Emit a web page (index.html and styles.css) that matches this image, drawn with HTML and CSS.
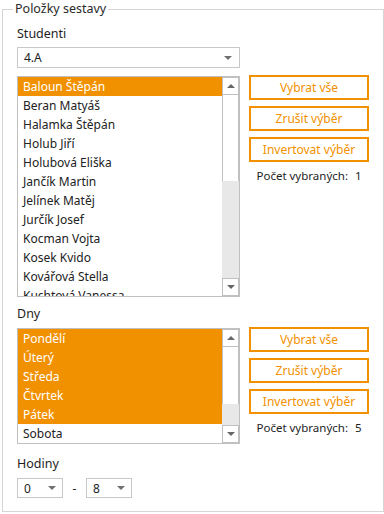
FILE: index.html
```html
<!DOCTYPE html>
<html lang="cs">
  <head>
    <meta charset="UTF-8" />
    <meta name="viewport" content="width=device-width, initial-scale=1.0" />
    <title>Položky sestavy</title>

    <link rel="stylesheet" href="styles.css">
  </head>
  <body>
    <fieldset class="panel">
      <legend>Položky sestavy</legend>

      <p class="label">Studenti</p>
      <div class="combo">
        <span>4.A</span>
        <span class="arrow"></span>
      </div>

      <div class="pick pick-students">
        <div class="listbox">
          <ul class="items">
            <li class="selected">Baloun Štěpán</li>
            <li>Beran Matyáš</li>
            <li>Halamka Štěpán</li>
            <li>Holub Jiří</li>
            <li>Holubová Eliška</li>
            <li>Jančík Martin</li>
            <li>Jelínek Matěj</li>
            <li>Jurčík Josef</li>
            <li>Kocman Vojta</li>
            <li>Kosek Kvido</li>
            <li>Kovářová Stella</li>
            <li>Kuchtová Vanessa</li>
          </ul>
          <div class="scrollbar">
            <div class="sb-btn"><span class="tri-up"></span></div>
            <div class="thumb thumb-students"></div>
            <div class="track"></div>
            <div class="sb-btn"><span class="tri-down"></span></div>
          </div>
        </div>
        <div class="actions">
          <button type="button">Vybrat vše</button>
          <button type="button">Zrušit výběr</button>
          <button type="button">Invertovat výběr</button>
          <p class="count">Počet vybraných: <span>1</span></p>
        </div>
      </div>

      <p class="label label-days">Dny</p>
      <div class="pick pick-days">
        <div class="listbox">
          <ul class="items">
            <li class="selected">Pondělí</li>
            <li class="selected">Úterý</li>
            <li class="selected">Středa</li>
            <li class="selected">Čtvrtek</li>
            <li class="selected">Pátek</li>
            <li>Sobota</li>
          </ul>
          <div class="scrollbar">
            <div class="sb-btn"><span class="tri-up"></span></div>
            <div class="thumb thumb-days"></div>
            <div class="track"></div>
            <div class="sb-btn"><span class="tri-down"></span></div>
          </div>
        </div>
        <div class="actions">
          <button type="button">Vybrat vše</button>
          <button type="button">Zrušit výběr</button>
          <button type="button">Invertovat výběr</button>
          <p class="count">Počet vybraných: <span>5</span></p>
        </div>
      </div>

      <p class="label label-hours">Hodiny</p>
      <div class="hours">
        <div class="combo small">
          <span>0</span>
          <span class="arrow"></span>
        </div>
        <span class="dash">-</span>
        <div class="combo small">
          <span>8</span>
          <span class="arrow"></span>
        </div>
      </div>
    </fieldset>
  </body>
</html>
```

FILE: styles.css
```css
* {
  margin: 0;
  padding: 0;
  box-sizing: border-box;
}
body {
  background-color: #fff;
  font-family: "Noto Sans", "Open Sans", sans-serif;
  font-size: 12px;
  color: #1e1e1e;
}

.panel {
  margin: 0 2px;
  height: 512px;
  border: 1px solid #d5d5d5;
  padding: 0 14px 12px;
}

.panel legend {
  margin-left: -4px;
  padding: 0 2px;
  line-height: 18px;
  font-size: 12.5px;
  color: #2a2a2a;
}

.label {
  line-height: 16px;
  margin-top: 8px;
  font-size: 12.5px;
}

.label-days {
  margin-top: 9px;
}

.label-hours {
  margin-top: 12px;
}

.combo {
  margin-top: 5px;
  width: 223px;
  height: 21px;
  border: 1px solid #c8c8c8;
  display: flex;
  align-items: center;
  justify-content: space-between;
  padding: 0 7px 0 6px;
}

.arrow {
  width: 0;
  height: 0;
  border-left: 4px solid transparent;
  border-right: 4px solid transparent;
  border-top: 4px solid #707070;
}

.pick {
  display: flex;
  gap: 9px;
  margin-top: 8px;
}

.pick-days {
  margin-top: 6px;
}

.listbox {
  width: 223px;
  border: 1px solid #c0c0c0;
  display: flex;
  overflow: hidden;
}

.pick-students .listbox {
  height: 221px;
}

.pick-days .listbox {
  height: 116px;
}

.items {
  list-style: none;
  flex: 1;
  overflow: hidden;
}

.items li {
  height: 19px;
  line-height: 19px;
  padding-left: 5px;
  white-space: nowrap;
  color: #222;
}

.items li.selected {
  background-color: #f29100;
  color: #fff;
}

.scrollbar {
  width: 17px;
  display: flex;
  flex-direction: column;
  background-color: #e8e8e8;
}

.sb-btn {
  height: 18px;
  border: 1px solid #c0c0c0;
  background-color: #fff;
  display: flex;
  align-items: center;
  justify-content: center;
}

.tri-up,
.tri-down {
  width: 0;
  height: 0;
  border-left: 4px solid transparent;
  border-right: 4px solid transparent;
}

.tri-up {
  border-bottom: 4px solid #666;
}

.tri-down {
  border-top: 4px solid #666;
}

.thumb {
  background-color: #fff;
  border-left: 1px solid #c0c0c0;
  border-right: 1px solid #c0c0c0;
}

.thumb-students {
  height: 86px;
}

.thumb-days {
  height: 57px;
}

.track {
  flex: 1;
}

.actions {
  width: 120px;
  display: flex;
  flex-direction: column;
  gap: 6px;
  margin-top: -1px;
}

.actions button {
  height: 25px;
  border: 2px solid #f29100;
  background-color: #fff;
  color: #f29100;
  font-family: inherit;
  font-size: 12px;
}

.count {
  text-align: center;
  margin-top: 0;
  line-height: 16px;
  font-size: 11.5px;
}

.count span {
  margin-left: 4px;
}

.hours {
  display: flex;
  align-items: center;
  margin-top: 6px;
}

.combo.small {
  margin-top: 0;
  width: 46px;
  height: 20px;
  padding: 0 6px 0 6px;
}

.dash {
  width: 23px;
  text-align: center;
}
```
